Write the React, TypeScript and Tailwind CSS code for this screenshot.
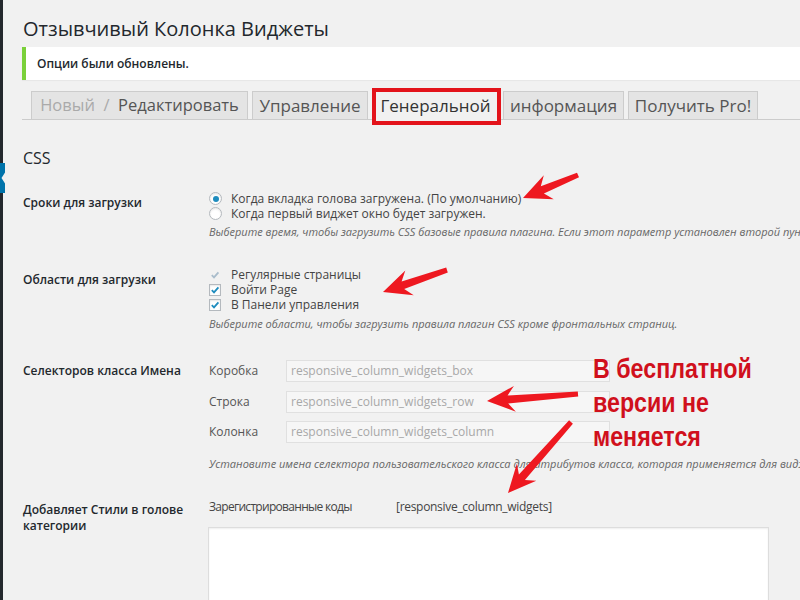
import React from "react";

// red annotation arrow: tail -> tip, drawn as one polygon
function arrowPoints(tx: number, ty: number, px: number, py: number) {
  const dx = px - tx;
  const dy = py - ty;
  const len = Math.sqrt(dx * dx + dy * dy);
  const ux = dx / len;
  const uy = dy / len;
  const nx = -uy;
  const ny = ux;
  const L = 28;
  const W = 13;
  const notch = 7;
  const bx = px - ux * (L - notch);
  const by = py - uy * (L - notch);
  const wx = px - ux * L;
  const wy = py - uy * L;
  const pts = [
    [tx + nx * 2.5, ty + ny * 2.5],
    [bx + nx * 4, by + ny * 4],
    [wx + nx * W, wy + ny * W],
    [px, py],
    [wx - nx * W, wy - ny * W],
    [bx - nx * 4, by - ny * 4],
    [tx - nx * 2.5, ty - ny * 2.5],
  ];
  return pts.map((p) => p[0].toFixed(1) + "," + p[1].toFixed(1)).join(" ");
}

const arrows = [
  [578, 175, 523, 198],
  [447, 270, 383, 292],
  [578, 394, 487, 401],
  [571, 422, 508, 493],
];

function Radio({ on }: { on?: boolean }) {
  return (
    <span className="w-[13px] h-[13px] shrink-0 rounded-full border border-[#b4b9be] bg-white shadow-[inset_0_1px_2px_rgba(0,0,0,0.1)] flex items-center justify-center">
      {on && <span className="w-[6px] h-[6px] rounded-full bg-[#1e8cbe]" />}
    </span>
  );
}

function Check({ disabled }: { disabled?: boolean }) {
  return (
    <span
      className={
        "w-[12px] h-[12px] shrink-0 border flex items-center justify-center " +
        (disabled ? "border-transparent" : "border-[#b4b9be] bg-white shadow-[inset_0_1px_2px_rgba(0,0,0,0.1)]")
      }
    >
      <svg width="10" height="10" viewBox="0 0 10 10">
        <path
          d="M1.8 5.2 L4 7.4 L8.4 2.4"
          fill="none"
          stroke={disabled ? "#a9bccb" : "#1e8cbe"}
          strokeWidth="1.8"
        />
      </svg>
    </span>
  );
}

const tabs = [
  { w: "w-[217px]", label: "" },
  { w: "w-[116px]", label: "Управление" },
  { w: "w-[127px]", label: "Генеральной", active: true },
  { w: "w-[121px]", label: "информация" },
  { w: "w-[130px]", label: "Получить Pro!" },
];

export default function App() {
  return (
    <div className="relative flex w-[800px] h-[600px] overflow-hidden bg-[#f1f1f1] font-['Open_Sans',sans-serif] text-[#23282d]">
      {/* admin sidebar edge */}
      <aside className="relative w-[3px] shrink-0 bg-[#23282d]">
        <svg className="absolute left-0 top-[163px]" width="6" height="30">
          <rect x="0" y="0" width="5" height="30" fill="#0073aa" />
          <polygon points="1.5,15 6,8 6,22" fill="#f1f1f1" />
        </svg>
      </aside>

      <main className="flex-1 min-w-0 pl-[19px] pt-[15px]">
        <h1 className="pl-px text-[20px] leading-[28px] font-normal whitespace-nowrap">
          Отзывчивый Колонка Виджеты
        </h1>

        <div className="mt-[4px] h-[33px] flex items-center border-l-4 border-[#7ad03a] bg-white pl-[11px] shadow-[0_1px_1px_rgba(0,0,0,0.04)]">
          <p className="text-[12px] font-semibold">Опции были обновлены.</p>
        </div>

        <nav className="mt-[11px] flex items-end gap-[4px] border-b border-[#ccc] pl-[9px]">
          {tabs.map((t, i) => (
            <div
              key={i}
              className={
                "relative h-[29px] -mb-px flex items-center justify-center border border-[#ccc] text-[17px] whitespace-nowrap " +
                t.w +
                (t.active ? " bg-[#f1f1f1] border-b-[#f1f1f1] text-[#333]" : " bg-[#e4e4e4] text-[#555]")
              }
            >
              {i === 0 ? (
                <span className="text-[16.5px]">
                  <span className="text-[#aaa]">Новый&nbsp; /&nbsp;</span> Редактировать
                </span>
              ) : (
                t.label
              )}
              {t.active && (
                <span className="absolute -left-px -right-[3px] -top-[4px] -bottom-[6px] border-4 border-[#e3131b]" />
              )}
            </div>
          ))}
        </nav>

        <h2 className="mt-[28px] pl-px text-[16px] leading-[20px] font-normal">CSS</h2>

        <div className="pl-px text-[12px] whitespace-nowrap">
          {/* timing */}
          <div className="mt-[23px] flex">
            <div className="w-[186px] shrink-0 pt-[4px] font-semibold leading-[16px]">Сроки для загрузки</div>
            <div>
              <div className="flex items-center gap-[9px] leading-[15px] text-[#444]">
                <Radio on />
                <span>Когда вкладка голова загружена. (По умолчанию)</span>
              </div>
              <div className="flex items-center gap-[9px] leading-[15px] text-[#444]">
                <Radio />
                <span>Когда первый виджет окно будет загружен.</span>
              </div>
              <p className="mt-[3px] text-[11px] italic leading-[15px] text-[#666]">
                Выберите время, чтобы загрузить CSS базовые правила плагина. Если этот параметр установлен второй пункт
              </p>
            </div>
          </div>

          {/* areas */}
          <div className="mt-[28px] flex">
            <div className="w-[186px] shrink-0 pt-[5px] font-semibold leading-[16px]">Области для загрузки</div>
            <div>
              <div className="flex items-center gap-[10px] leading-[15px] text-[#444]">
                <Check disabled />
                <span>Регулярные страницы</span>
              </div>
              <div className="flex items-center gap-[10px] leading-[15px] text-[#444]">
                <Check />
                <span>Войти Page</span>
              </div>
              <div className="flex items-center gap-[10px] leading-[15px] text-[#444]">
                <Check />
                <span>В Панели управления</span>
              </div>
              <p className="mt-[4px] text-[11px] italic leading-[15px] text-[#666]">
                Выберите области, чтобы загрузить правила плагин CSS кроме фронтальных страниц.
              </p>
            </div>
          </div>

          {/* selectors */}
          <div className="mt-[29px] flex">
            <div className="w-[186px] shrink-0 pt-[3px] font-semibold leading-[16px]">Селекторов класса Имена</div>
            <div>
              <div className="flex flex-col gap-[8.5px]">
                {[
                  ["Коробка", "responsive_column_widgets_box"],
                  ["Строка", "responsive_column_widgets_row"],
                  ["Колонка", "responsive_column_widgets_column"],
                ].map(([k, v]) => (
                  <div key={k} className="flex items-center">
                    <span className="w-[77px] text-[#555]">{k}</span>
                    <div className="h-[22px] w-[324px] flex items-center border border-[#e0e0e0] bg-[#f6f6f6] pl-[4px] text-[#a8a8a8]">
                      {v}
                    </div>
                  </div>
                ))}
              </div>
              <p className="mt-[12.5px] text-[11px] italic leading-[15px] text-[#666]">
                Установите имена селектора пользовательского класса для атрибутов класса, которая применяется для виджетов
              </p>
            </div>
          </div>

          {/* styles */}
          <div className="mt-[28px] flex">
            <div className="w-[186px] shrink-0 pt-[3.5px] font-semibold leading-[16px]">
              Добавляет Стили в голове
              <br />
              категории
            </div>
            <div>
              <div className="flex leading-[15px] text-[#444] tracking-[-0.7px]">
                <span className="w-[187px]">Зарегистрированные коды</span>
                <span className="tracking-[-0.3px]">[responsive_column_widgets]</span>
              </div>
              <div className="mt-[13px] -ml-px h-[110px] w-[561px] border border-[#ddd] bg-white shadow-[inset_0_1px_2px_rgba(0,0,0,0.07)]" />
            </div>
          </div>
        </div>
      </main>

      {/* annotations */}
      <svg className="pointer-events-none absolute left-0 top-0" width="800" height="600">
        {arrows.map((a, i) => (
          <polygon key={i} points={arrowPoints(a[0], a[1], a[2], a[3])} fill="#ee1820" />
        ))}
      </svg>
      <div className="pointer-events-none absolute left-[593px] top-[352px] origin-left scale-x-[0.83] font-['Liberation_Sans',sans-serif] text-[28px] font-bold leading-[34px] text-[#d0101c] whitespace-nowrap">
        В бесплатной
        <br />
        версии не
        <br />
        меняется
      </div>
    </div>
  );
}
